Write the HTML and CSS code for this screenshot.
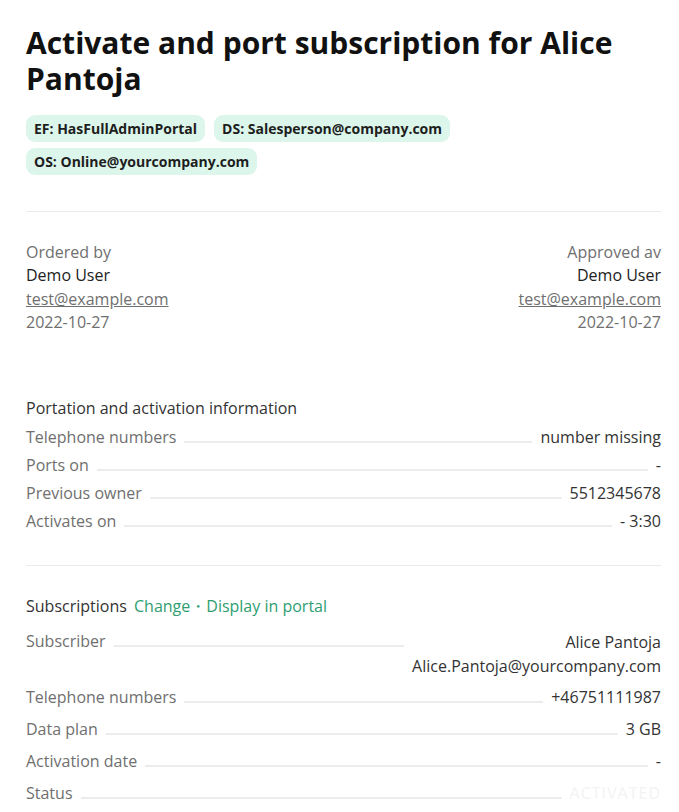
FILE: index.html
```html
<!DOCTYPE html>
<html lang="en">
<head>
<meta charset="utf-8">
<title>Activate and port subscription</title>
<link rel="stylesheet" href="styles.css">
</head>
<body>
<main class="page">
  <h1 class="title">Activate and port subscription for Alice Pantoja</h1>
  <div class="chips">
    <span class="chip">EF: HasFullAdminPortal</span>
    <span class="chip">DS: Salesperson@company.com</span>
    <span class="chip">OS: Online@yourcompany.com</span>
  </div>
  <hr class="divider">
  <section class="people">
    <div class="person">
      <div class="muted">Ordered by</div>
      <div class="strong">Demo User</div>
      <a class="mail" href="#">test@example.com</a>
      <div class="muted">2022-10-27</div>
    </div>
    <div class="person right">
      <div class="muted">Approved av</div>
      <div class="strong">Demo User</div>
      <a class="mail" href="#">test@example.com</a>
      <div class="muted">2022-10-27</div>
    </div>
  </section>
  <section class="info">
    <h2 class="heading">Portation and activation information</h2>
    <div class="row"><span class="label">Telephone numbers</span><span class="leader"></span><span class="value">number missing</span></div>
    <div class="row"><span class="label">Ports on</span><span class="leader"></span><span class="value">-</span></div>
    <div class="row"><span class="label">Previous owner</span><span class="leader"></span><span class="value">5512345678</span></div>
    <div class="row"><span class="label">Activates on</span><span class="leader"></span><span class="value">- 3:30</span></div>
  </section>
  <hr class="divider second">
  <section class="subs">
    <h2 class="heading">Subscriptions <a class="link" href="#">Change</a><span class="dot">・</span><a class="link" href="#">Display in portal</a></h2>
    <div class="row tall first"><span class="label">Subscriber</span><span class="leader"></span><span class="value multi"><span>Alice Pantoja</span><span>Alice.Pantoja@yourcompany.com</span></span></div>
    <div class="row tall"><span class="label">Telephone numbers</span><span class="leader"></span><span class="value">+46751111987</span></div>
    <div class="row tall"><span class="label">Data plan</span><span class="leader"></span><span class="value">3 GB</span></div>
    <div class="row tall"><span class="label">Activation date</span><span class="leader"></span><span class="value">-</span></div>
    <div class="row tall"><span class="label">Status</span><span class="leader"></span><span class="value ghost">ACTIVATED</span></div>
  </section>
</main>
</body>
</html>
```
FILE: styles.css
```css
* { box-sizing: border-box; }
html, body { margin: 0; background: #fff; }
body {
  font-family: "Open Sans", "Noto Sans", sans-serif;
  color: #333;
  font-size: 16px;
  line-height: 23px;
}
.page {
  padding: 25px 18px 0 26px;
  display: flex;
  flex-direction: column;
}
.title {
  margin: 0;
  font-size: 30px;
  line-height: 36px;
  font-weight: 700;
  color: #111;
}
.chips {
  display: flex;
  flex-wrap: wrap;
  gap: 6px 9px;
  margin-top: 18px;
}
.chip {
  background: #dcf6eb;
  border-radius: 9px;
  padding: 2px 8px;
  font-size: 14px;
  line-height: 23px;
  font-weight: 700;
  color: #1e1e1e;
}
.divider {
  border: 0;
  border-top: 1px solid #ebebeb;
  margin: 36px 0 0;
  width: 100%;
}
.divider.second { margin-top: 27px; }
.people {
  display: flex;
  justify-content: space-between;
  margin-top: 29px;
}
.person { display: flex; flex-direction: column; }
.person.right { align-items: flex-end; }
.muted { color: #6f6f6f; }
.strong { color: #222; }
.mail { color: #6f6f6f; text-decoration: underline; line-height: 24px; }
.info { margin-top: 63px; display: flex; flex-direction: column; }
.heading {
  margin: 0 0 6px;
  font-size: 16px;
  font-weight: 400;
  line-height: 23px;
  color: #333;
}
.row {
  display: flex;
  align-items: flex-start;
  height: 28px;
}
.row .label { color: #6f6f6f; white-space: nowrap; }
.leader {
  flex: 1;
  height: 2px;
  background: #ececec;
  margin: 15px 8px 0;
}
.value { color: #333; white-space: nowrap; text-align: right; }
.value.multi { display: flex; flex-direction: column; align-items: flex-end; line-height: 24px; }
.ghost { color: #f3f3f3; letter-spacing: 1px; }
.subs { margin-top: 29px; display: flex; flex-direction: column; }
.subs .heading { margin-bottom: 12px; }
.link { color: #2f9e70; text-decoration: none; }
.heading .link:first-of-type { margin-left: 3px; }
.dot { color: #2f9e70; }
.row.tall { height: 32px; }
.row.tall.first { height: auto; margin-bottom: 8px; }
```
